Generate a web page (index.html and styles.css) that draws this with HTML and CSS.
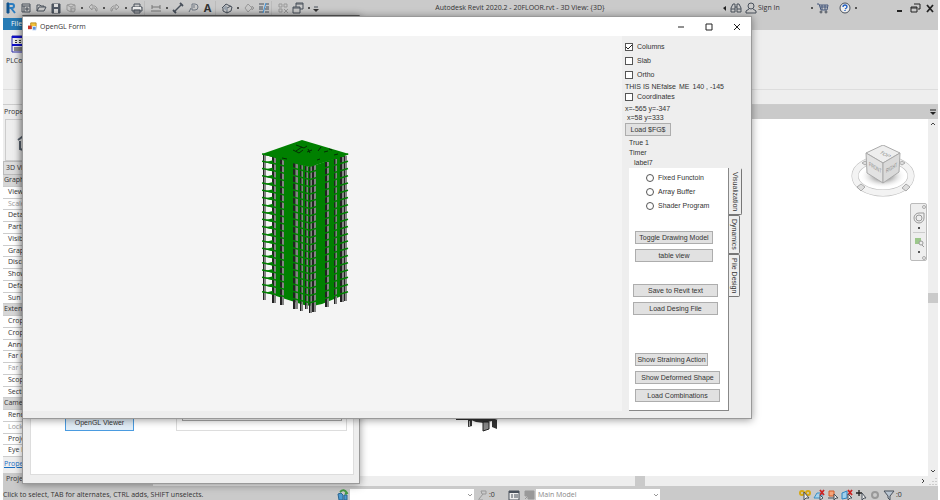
FILE: index.html
```
<!DOCTYPE html>
<html lang="en">

<head>
    <meta charset="UTF-8">
    <meta name="viewport" content="width=device-width, initial-scale=1.0">
    <title>Autodesk Revit 2020.2</title>
    <link rel="stylesheet" href="styles.css">
</head>

<body>
    <header class="titlebar">
        <button class="tool" aria-label="Revit"><svg viewBox="0 0 12 12"><path d="M2 1h2v10H2z" fill="#12548f" stroke="#12548f"/><path d="M4 2h3a2 2 0 0 1 0 4H4M6 6l4 5" fill="none" stroke="#2b7dc0" stroke-width="2"/></svg></button>
        <button class="tool" aria-label="Home"><svg viewBox="0 0 12 12"><path d="M2 2h8v8H2zM2 4h8M4 4v6M6 6h2v2H6z"/></svg></button>
        <button class="tool" aria-label="Open"><svg viewBox="0 0 12 12"><path d="M2 9V3h3l1 1h3v1M2 9l2-4h7L9 9z"/></svg></button>
        <button class="tool" aria-label="Save"><svg viewBox="0 0 12 12"><path d="M2 2h8v9H2z" fill="#505965"/><path d="M4 2h4v3H4zM4 7h4v4H4z" fill="#ddd" stroke="none"/></svg></button>
        <button class="tool dim" aria-label="Synchronize"><svg viewBox="0 0 12 12"><path d="M6 2l4 1v5l-4 2-4-2V3zM2 3l4 2 4-2M6 5v5"/><circle cx="8" cy="8" r="2" fill="#bbb"/></svg></button>
        <span class="dot"></span>
        <button class="tool dim" aria-label="Undo"><svg viewBox="0 0 12 12"><path d="M5 2L2 5l3 3V6h3l1 3h1V6L8 4H5z"/></svg></button>
        <span class="dot"></span>
        <button class="tool dim" aria-label="Redo"><svg viewBox="0 0 12 12"><path d="M7 2l3 3-3 3V6H4L3 9H2V6l2-2h3z"/></svg></button>
        <span class="dot"></span>
        <button class="tool" aria-label="Print"><svg viewBox="0 0 12 12"><path d="M3 5V2h6v3M1 5h10v4H1zM3 8h6v3H3z"/><path d="M2 5h8v2H2z" fill="#eee" stroke="none"/></svg></button>
        <span class="sep"></span>
        <button class="tool dim" aria-label="Measure"><svg viewBox="0 0 12 12"><path d="M2 3v4M10 3v4M2 5h8M1 9h10" stroke="#777"/></svg></button>
        <span class="dot"></span>
        <button class="tool" aria-label="Aligned Dimension"><svg viewBox="0 0 12 12"><path d="M3 9l6-6" stroke-width="1.4"/><path d="M1 8l3 3M8 1l3 3" stroke-width="1.8"/></svg></button>
        <button class="tool" aria-label="Tag"><svg viewBox="0 0 12 12"><path d="M2 10l2-4M5 8V2h3a3 3 0 0 1 0 6zM7 3v3" stroke="#707883"/></svg></button>
        <button class="tool letter" aria-label="Text">A</button>
        <span class="sep"></span>
        <button class="tool" aria-label="Default 3D View"><svg viewBox="0 0 12 12"><path d="M1 6l4-4 6 3-1 4-4 2-4-2V6M6 6v5M6 6l4-2"/><path d="M2 6l3-3 2 4v3z" fill="#9aa3ad" stroke="none"/></svg></button>
        <span class="dot"></span>
        <button class="tool dim" aria-label="Section"><svg viewBox="0 0 12 12"><path d="M5 2l4 4-4 4-3-4zM9 4l2 2-2 2z"/></svg></button>
        <button class="tool" aria-label="Thin Lines"><svg viewBox="0 0 12 12"><path d="M1 2h5M1 5h4M1 7h4M1 10h4M8 2h3M8 5h3M7 7h4M7 10h4" stroke-width="1.2"/><path d="M8 1L5 11" stroke="#3b93dc"/></svg></button>
        <span class="sep"></span>
        <button class="tool dim" aria-label="Close Hidden Windows"><svg viewBox="0 0 12 12"><path d="M2 2h3v3H2zM7 2h3v3H7zM2 7h3v3H2zM7 7l4 4M11 7l-4 4"/></svg></button>
        <button class="tool" aria-label="Switch Windows"><svg viewBox="0 0 12 12"><path d="M4 1h7v6H8M1 5h7v6H1zM4 5V1M1 6h7M4 2h7"/></svg></button>
        <span class="dot"></span>
        <button class="tool narrow" aria-label="Customize"><svg viewBox="0 0 6 12"><path d="M1 5h4"/><path d="M0 7h6L3 10z" fill="#333" stroke="none"/></svg></button>

        <h1 class="app-title">Autodesk Revit 2020.2 - 20FLOOR.rvt - 3D View: {3D}</h1>

        <button class="tool narrow" aria-label="Back"><svg viewBox="0 0 6 12"><path d="M4 4v5L1 6z" fill="#222" stroke="none"/></svg></button>
        <button class="tool" aria-label="Search"><svg viewBox="0 0 12 12"><path d="M1 10V6l2-4h2v8zM7 10V2h2l2 4v4zM5 5h2M1 7h4M7 7h4"/></svg></button>
        <button class="tool" aria-label="Account"><svg viewBox="0 0 12 12"><circle cx="6" cy="4" r="3"/><path d="M4 7l-3 2v2h10V9L8 7"/></svg></button>
        <a class="sign-in" href="#">Sign In</a>
        <span class="dot"></span>
        <button class="tool" aria-label="App Store"><svg viewBox="0 0 12 12"><path d="M0 2h2l2 6h6l1-5H3M5 3v5M8 3v5M3 5h7" stroke="#46587d"/><circle cx="4" cy="10" r="1"/><circle cx="9" cy="10" r="1"/></svg></button>
        <button class="tool help" aria-label="Help"><svg viewBox="0 0 12 12"><circle cx="6" cy="6" r="5" fill="#eee"/><path d="M4 5q0-2 2-2t2 2q0 1-2 2M6 8v1" stroke="#1d5cc0" stroke-width="1.3"/></svg></button>
        <span class="dot"></span>
        <div class="app-controls">
            <button class="tool" aria-label="Minimize"><svg viewBox="0 0 12 12"><path d="M3 9h5" stroke="#222" stroke-width="2"/></svg></button>
            <button class="tool" aria-label="Restore"><svg viewBox="0 0 12 12"><path d="M5 2h6v5H9M2 5h6v5H2zM2 6h6" stroke="#222"/></svg></button>
            <button class="tool" aria-label="Close"><svg viewBox="0 0 12 12"><path d="M3 3l6 7M9 3l-6 7" stroke="#222" stroke-width="1.8"/></svg></button>
        </div>
    </header>

    <nav class="ribbon-tabs">
        <button class="file-tab">File</button>
    </nav>
    <section class="ribbon">
        <button class="ribbon-button">
            <svg viewBox="0 0 18 18"><path d="M1 1h16v16H1z" fill="#eee" stroke="#2b2ba8"/><path d="M1 2h16M1 10h16" stroke="#11c" stroke-width="2"/><path d="M4 5h2v1H4zM8 5h2v1H8zM4 7h2v1H4zM8 7h2v1H8z" fill="#333"/><path d="M3 12h12v4H3z" fill="#888"/></svg>
            PLCoord
        </button>
    </section>

    <main class="workspace">
        <aside class="properties">
            <h2 class="panel-title">Properties</h2>
            <div class="preview">
                <svg viewBox="0 0 20 20"><path d="M2 8l8-6 8 6v8l-8 3-6-2V9" fill="none" stroke="#5a6470" stroke-width="2"/><path d="M7 10h5v7H7z" fill="#454e59"/></svg>
            </div>
            <button class="type-row">3D View: {3D}</button>
            <ul class="props">
                <li class="group">Graphics</li>
                <li>View Scale</li>
                <li class="disabled">Scale Value</li>
                <li>Detail Level</li>
                <li>Parts Visibility</li>
                <li>Visibility</li>
                <li>Graphic Display</li>
                <li>Discipline</li>
                <li>Show Hidden</li>
                <li>Default Analysis</li>
                <li>Sun Path</li>
                <li class="group">Extents</li>
                <li>Crop View</li>
                <li>Crop Region</li>
                <li>Annotation Crop</li>
                <li>Far Clip Active</li>
                <li class="disabled">Far Clip Offset</li>
                <li>Scope Box</li>
                <li>Section Box</li>
                <li class="group">Camera</li>
                <li>Rendering</li>
                <li class="disabled">Locked</li>
                <li>Projection Mode</li>
                <li>Eye Elevation</li>
            </ul>
            <a class="props-help" href="#">Properties help</a>
            <h2 class="browser-title">Project Browser</h2>
        </aside>

        <section class="view">
            <div class="view-tabs">
                <button class="tool narrow" aria-label="Views"><svg viewBox="0 0 6 12"><path d="M0 4h6" stroke="#222"/><path d="M0 6h6L3 9z" fill="#222" stroke="none"/></svg></button>
            </div>
            <div class="view-body">
                <div class="drawing">
                    <svg class="pile" viewBox="0 0 44 14">
                        <path d="M0 1h42l-6 2-8 2-8-1-5-2H0z" fill="#333"/>
                        <path d="M12 2h4v6l-4 1zM36 2h5v9l-5-2z" fill="#333"/>
                        <path d="M13 3h1v5h-1z" fill="#aaa"/>
                        <path d="M27 4h6v7l-6 2z" fill="#888" stroke="#222"/>
                    </svg>
                    <svg class="cube" viewBox="0 0 64 54">
                        <defs>
                            <radialGradient id="shade"><stop offset="0.3" stop-color="#999"/><stop offset="1" stop-color="#fff" stop-opacity="0"/></radialGradient>
                        </defs>
                        <ellipse cx="32" cy="31" rx="28" ry="17" fill="none" stroke="#bbb" stroke-width="7"/>
                        <ellipse cx="32" cy="31" rx="28" ry="17" fill="none" stroke="#f3f3f3" stroke-width="6"/>
                        <ellipse cx="32" cy="31" rx="23" ry="12" fill="url(#shade)"/>
                        <path d="M6 42l4-3 4 3-4 4zM51 43l4-4 4 3-4 4zM11 18l3-2 3 2-3 2zM48 18l3-2 3 2-3 2z" fill="#ddd" stroke="#aaa"/>
                        <path d="M32 0l17 8-17 10-17-10z" fill="#eee" stroke="#aaa"/>
                        <path d="M15 8l17 10v20L16 28z" fill="#e2e2e2" stroke="#aaa"/>
                        <path d="M49 8l-17 10v20l16-11z" fill="#dadada" stroke="#aaa"/>
                        <text transform="matrix(.8 .4 -.7 .5 28 8)">TOP</text>
                        <text transform="matrix(.6 .35 0 1 18 21)">FRONT</text>
                        <text transform="matrix(.6 -.35 0 1 35 28)">RIGHT</text>
                    </svg>
                    <div class="navbar">
                        <span class="nav-dot"></span>
                        <button class="tool dim" aria-label="Steering Wheel"><svg viewBox="0 0 12 12"><path d="M6 1h5v5a5 5 0 1 1-5-5z"/><circle cx="6" cy="6" r="3"/></svg></button>
                        <span class="dot"></span>
                        <hr>
                        <button class="tool dim" aria-label="Zoom"><svg viewBox="0 0 12 12"><path d="M2 2h6v6H2z" fill="#9cc78b" stroke="none"/><circle cx="8" cy="7" r="2" fill="#eee"/><path d="M9 9l2 2"/></svg></button>
                        <span class="dot"></span>
                        <span class="nav-dot"></span>
                    </div>
                </div>
                <div class="scroll-y">
                    <svg viewBox="0 0 10 10"><path d="M3 6l2-2 2 2"/></svg>
                    <span class="thumb"></span>
                    <svg viewBox="0 0 10 10"><path d="M3 4l2 2 2-2"/></svg>
                </div>
            </div>
            <div class="scroll-x">
                <span class="thumb"></span>
                <svg viewBox="0 0 10 10"><path d="M4 3l2 2-2 2"/></svg>
                <svg viewBox="0 0 10 10"><path d="M8 2v1M8 5v1M8 8v1M5 5v1M5 8v1M2 8v1" stroke="#aaa"/></svg>
            </div>
        </section>
    </main>

    <footer class="status">
        <p class="hint">Click to select, TAB for alternates, CTRL adds, SHIFT unselects.</p>
        <button class="tool" aria-label="Worksets"><svg viewBox="0 0 12 12"><path d="M1 5l3-1 2 2v5H2zM7 6h3v5H7z" fill="#4d9ad0" stroke="#2b6690"/><path d="M3 3q4-4 7 1L8 5" stroke="#469a45" stroke-width="2"/></svg></button>
        <select class="workset" aria-label="Active workset"><option></option></select>
        <button class="tool dim" aria-label="Editable only"><svg viewBox="0 0 12 12"><path d="M3 10l4-5M2 11h5M5 2h5v3H6z"/></svg></button>
        <output class="count">:0</output>
        <button class="tool" aria-label="Design options"><svg viewBox="0 0 12 12"><path d="M1 2h10v9H1z" fill="#eee"/><path d="M1 3h10" stroke-width="2"/><path d="M3 6h2M6 6h4M3 8h2M6 8h4"/></svg></button>
        <button class="tool dim" aria-label="Add to set"><svg viewBox="0 0 12 12"><path d="M2 2h9v8H5V7H2z" fill="#999"/><path d="M2 10l3-3"/></svg></button>
        <select class="option" aria-label="Design option"><option>Main Model</option></select>
        <div class="select-tools">
            <button class="tool" aria-label="Select links"><svg viewBox="0 0 12 12"><path d="M1 4a2 2 0 1 1 4 0 2 2 0 1 1-4 0zM7 4a2 2 0 1 1 4 0 2 2 0 1 1-4 0z" stroke="#d6a712" stroke-width="2"/><path d="M5 3v8l2-2h3z" fill="#eee"/></svg></button>
            <button class="tool" aria-label="Select underlay"><svg viewBox="0 0 12 12"><path d="M1 9l3-5h5v5z" fill="#a5d4ee" stroke="#3b8ec4"/><path d="M7 1l4 5M11 1L7 6" stroke="#c22" stroke-width="1.8"/><path d="M7 6v5l3-2z" fill="#eee"/></svg></button>
            <button class="tool" aria-label="Select pinned"><svg viewBox="0 0 12 12"><path d="M2 2h5v5H2z" fill="#f5a57b" stroke="#d45b28"/><path d="M1 9h6"/><path d="M7 5v6l2-2h2z" fill="#eee"/></svg></button>
            <button class="tool" aria-label="Select by face"><svg viewBox="0 0 12 12"><path d="M1 4l5-2v7l-5 1z" fill="#9fd0ee" stroke="#2d82c0"/><path d="M7 1l4 5M11 1L7 6" stroke="#c22" stroke-width="1.8"/><path d="M7 5v6l2-2h2z" fill="#eee"/></svg></button>
            <button class="tool" aria-label="Drag on selection"><svg viewBox="0 0 12 12"><path d="M4 1v6M1 4h6" stroke="#222" stroke-width="1.3"/><path d="M7 4v7l2-2h2z" fill="#eee"/></svg></button>
            <button class="tool dim" aria-label="Background processes"><svg viewBox="0 0 12 12"><circle cx="6" cy="6" r="3" stroke-width="2"/></svg></button>
            <button class="tool" aria-label="Filter"><svg viewBox="0 0 12 12"><path d="M1 2h10L7 7v4L5 9V7z" fill="#b8c4d0"/></svg></button>
            <output class="count">:0</output>
        </div>
    </footer>

    <section class="window plugin">
        <div class="plugin-body">
            <button class="viewer-button">OpenGL Viewer</button>
            <fieldset class="plugin-group"><div class="plugin-list"></div></fieldset>
        </div>
    </section>

    <section class="window form">
        <header class="form-title">
            <svg class="form-icon" viewBox="0 0 10 10"><path d="M3 1h6v6H3z" fill="#f3c33c" stroke="#b98a1d"/><path d="M0 4h4v4H0z" fill="#c8372d"/><path d="M5 5h4v4H5z" fill="#5a90dc" stroke="#dce8f8"/></svg>
            <h2>OpenGL Form</h2>
            <button aria-label="Minimize"><svg viewBox="0 0 10 10"><path d="M2 5h6"/></svg></button>
            <button aria-label="Maximize"><svg viewBox="0 0 10 10"><path d="M2 2h6v6H2z"/></svg></button>
            <button aria-label="Close"><svg viewBox="0 0 10 10"><path d="M2 2l6 6M8 2L2 8"/></svg></button>
        </header>
        <div class="form-body">
            <div class="gl-canvas">
                <svg class="building" id="building" viewBox="0 0 90 178"></svg>
            </div>
            <div class="side">
                <label class="check"><input type="checkbox" checked>Columns</label>
                <label class="check"><input type="checkbox">Slab</label>
                <label class="check"><input type="checkbox">Ortho</label>
                <p class="mouse"><span>THIS IS NE</span><span>false</span><span class="me">ME</span><span>140 , -145</span></p>
                <label class="check tight"><input type="checkbox">Coordinates</label>
                <p class="coord">x=-565 y=-347</p>
                <p class="coord second">x=58 y=333</p>
                <button class="btn load">Load $FG$</button>
                <p class="info">True 1</p>
                <p class="info">Timer</p>
                <p class="info indent">label7</p>
                <div class="tabs">
                    <div class="pane">
                        <label class="radio"><input type="radio" name="mode">Fixed Functoin</label>
                        <label class="radio"><input type="radio" name="mode">Array Buffer</label>
                        <label class="radio"><input type="radio" name="mode">Shader Program</label>
                        <div class="buttons draw">
                            <button class="btn">Toggle Drawing Model</button>
                            <button class="btn">table view</button>
                        </div>
                        <div class="buttons file">
                            <button class="btn">Save to Revit text</button>
                            <button class="btn">Load Desing File</button>
                        </div>
                        <div class="buttons results">
                            <button class="btn short">Show Straining Action</button>
                            <button class="btn">Show Deformed Shape</button>
                            <button class="btn">Load Combinations</button>
                        </div>
                    </div>
                    <div class="tab-list" role="tablist">
                        <button class="tab active" role="tab">Visualization</button>
                        <button class="tab" role="tab">Dynamics</button>
                        <button class="tab" role="tab">Pile Design</button>
                    </div>
                </div>
            </div>
        </div>
    </section>

    <script src="building.js"></script>
</body>

</html>
```
FILE: styles.css
```
* {
    box-sizing: border-box;
}

body {
    display: flex;
    flex-direction: column;
    height: 100vh;
    margin: 0;
    padding: 0 2px 0 3px;
    overflow: hidden;
    position: relative;
    background: #fff;
    color: #333;
    font: 7px/10px "Open Sans", "Noto Sans", sans-serif;
}

h1, h2, p, ul {
    margin: 0;
    padding: 0;
    font-size: inherit;
    font-weight: normal;
    white-space: nowrap;
}

button, select, input {
    font: inherit;
    color: inherit;
    margin: 0;
    padding: 0;
    border: 0;
    background: none;
}

svg {
    display: block;
}

/* Toolbar */
.titlebar {
    display: flex;
    align-items: center;
    height: 16px;
    background: #cacaca;
}

.tool {
    flex: none;
    display: flex;
    justify-content: center;
    align-items: center;
    width: 15px;
    height: 12px;
}

.tool svg {
    height: 12px;
    fill: none;
    stroke: #48505b;
}

.tool.dim svg {
    stroke: #999;
}

.tool.narrow {
    width: 7px;
}

.tool.letter {
    font: bold 11px/12px "Open Sans", sans-serif;
}

.dot {
    flex: none;
    width: 7px;
    height: 2px;
    background: linear-gradient(#555, #555) center / 2px 2px no-repeat;
}

.sep {
    flex: none;
    width: 4px;
    height: 14px;
    border-left: 1px solid #bbb;
}

.app-title {
    flex: 1;
    text-align: center;
}

.sign-in {
    width: 50px;
    color: inherit;
    text-decoration: none;
}

.help {
    margin-left: 7px;
}

.app-controls {
    display: flex;
    margin: 0 1px 0 33px;
}

.ribbon-tabs {
    height: 14px;
    padding-top: 2px;
    background: #cacaca;
}

.file-tab {
    width: 28px;
    height: 12px;
    padding-left: 8px;
    text-align: left;
    background: #267bb5;
    color: #fff;
}

.ribbon {
    height: 75px;
    background: linear-gradient(#eee 59px, #ddd 59px, #ddd 60px, #eee 60px);
    border-bottom: 1px solid #ccc;
}

.ribbon-button {
    display: flex;
    flex-direction: column;
    align-items: center;
    gap: 3px;
    padding: 5px 3px;
}

.ribbon-button svg {
    width: 18px;
}

/* Properties panel */
.workspace {
    flex: 1;
    display: flex;
    min-height: 0;
}

.properties {
    display: flex;
    flex-direction: column;
    width: 150px;
    background: #eee;
}

.panel-title {
    padding: 2px 1px;
}

.preview {
    height: 42px;
    margin: 0 2px;
    padding: 12px 10px;
    border: 1px solid #ccc;
}

.preview svg {
    width: 20px;
}

.type-row {
    height: 14px;
    padding-left: 2px;
    text-align: left;
    background: #ddd;
    border: 1px solid #bbb;
}

.props {
    flex: 1;
    display: flex;
    flex-direction: column;
    list-style: none;
}

.props li {
    flex: 1;
    padding-left: 5px;
    background: #fff;
    border-bottom: 1px solid #ccc;
}

.props .group {
    padding-left: 1px;
    background: #d6d6d6;
}

.props .disabled {
    color: #999;
}

.props-help {
    padding: 2px 1px 4px;
    color: #1a6fc4;
}

.browser-title {
    padding: 1px 3px 2px;
    background: #cacaca;
}

/* 3D view */
.view {
    flex: 1;
    display: flex;
    flex-direction: column;
}

.view-tabs {
    display: flex;
    justify-content: flex-end;
    height: 14px;
    padding: 1px 2px;
    background: #cacaca;
}

.view-body {
    flex: 1;
    display: flex;
}

.drawing {
    flex: 1;
    position: relative;
}

.pile {
    position: absolute;
    left: 303px;
    bottom: 44px;
    width: 44px;
}

.cube {
    position: absolute;
    top: 26px;
    right: 13px;
    width: 64px;
}

.cube text {
    font: 6px "Liberation Sans", sans-serif;
    fill: #888;
}

.navbar {
    position: absolute;
    top: 84px;
    right: 1px;
    display: flex;
    flex-direction: column;
    align-items: center;
    gap: 3px;
    width: 17px;
    padding: 1px 0 0;
    background: #eee;
    border: 1px solid #bbb;
    border-radius: 2px;
}

.navbar hr {
    width: 12px;
    margin: 0;
    border: 0;
    border-top: 1px solid #ccc;
}

.nav-dot {
    align-self: flex-end;
    width: 4px;
    height: 4px;
    border: 1px solid #aaa;
    border-radius: 50%;
}

.scroll-y, .scroll-x {
    display: flex;
    justify-content: space-between;
    background: #eee;
}

.scroll-y {
    flex-direction: column;
    width: 10px;
}

.scroll-x {
    height: 10px;
}

.scroll-x .thumb {
    margin-left: auto;
    margin-right: 273px;
}

.scroll-y svg, .scroll-x svg {
    width: 10px;
    height: 10px;
    fill: none;
    stroke: #444;
}

.thumb {
    width: 10px;
    height: 10px;
    background: #cacaca;
}

/* Status bar */
.status {
    display: flex;
    align-items: center;
    height: 14px;
    padding-top: 3px;
    background: #cacaca;
}

.hint {
    width: 332px;
}

.status select {
    height: 11px;
    width: 124px;
    padding: 0 2px;
    color: #888;
    appearance: none;
    background: #fff url("data:image/svg+xml,%3Csvg xmlns='http://www.w3.org/2000/svg' viewBox='0 0 8 8'%3E%3Cpath d='M2 3l2 2 2-2' fill='none' stroke='%23999'/%3E%3C/svg%3E") no-repeat right / 8px;
}

.count {
    width: 17px;
}

.select-tools {
    display: flex;
    align-items: center;
    margin-left: auto;
    margin-right: 25px;
}

.select-tools .tool {
    width: 14px;
}

/* Floating windows */
.window {
    position: absolute;
    display: flex;
    flex-direction: column;
    background: #eee;
    border: 1px solid #999;
    box-shadow: 0 1px 8px rgba(0, 0, 0, 0.4);
    font-family: "Liberation Sans", Arial, sans-serif;
}

.plugin {
    top: 15px;
    bottom: 16px;
    left: 22px;
    width: 36%;
    padding: 0 5px 8px 7px;
    border-top-color: #555;
}

.plugin-body {
    flex: 1;
    display: flex;
    align-items: flex-end;
    gap: 42px;
    padding: 0 6px 43px 34px;
    background: #fff;
    border: 1px solid #ddd;
}

.viewer-button {
    width: 69px;
    height: 16px;
    background: #e1edf7;
    border: 1px solid #4a9be0;
}

.plugin-group {
    flex: 1;
    min-width: 0;
    height: 40px;
    margin: 0;
    padding: 0 4px 10px 5px;
    border: 1px solid #ddd;
}

.plugin-list {
    height: 29px;
    border: 1px solid #aaa;
}

.form {
    top: 16px;
    bottom: 81px;
    left: 22px;
    right: 188px;
}

.form-title {
    display: flex;
    align-items: center;
    height: 19px;
    padding-left: 5px;
    background: #fff;
    font-family: "Open Sans", sans-serif;
}

.form-title h2 {
    flex: 1;
    padding-left: 3px;
}

.form-icon {
    width: 9px;
}

.form-title button {
    width: 28px;
    display: flex;
    justify-content: center;
}

.form-title button svg {
    width: 10px;
    fill: none;
    stroke: #222;
}

.form-body {
    flex: 1;
    display: flex;
    padding-bottom: 7px;
}

.gl-canvas {
    flex: 1;
    background: #f4f4f4;
    padding: 102px 0 0 239px;
}

.building {
    width: 90px;
}

.side {
    display: flex;
    flex-direction: column;
    align-items: flex-start;
    width: 129px;
    padding: 4px 9px 0 3px;
}

.check, .radio {
    display: flex;
    align-items: center;
    gap: 4px;
    height: 14px;
}

.check.tight {
    height: 10px;
}

.check input, .radio input {
    appearance: none;
    width: 8px;
    height: 8px;
    background: #fff;
    border: 1px solid #555;
}

.radio input {
    border-radius: 50%;
}

.check input:checked {
    background: #fff url("data:image/svg+xml,%3Csvg xmlns='http://www.w3.org/2000/svg' viewBox='0 0 6 6'%3E%3Cpath d='M0 3l2 2 4-4' fill='none' stroke='%23222'/%3E%3C/svg%3E");
}

.mouse {
    display: flex;
}

.mouse .me {
    padding: 0 3px;
}

.coord {
    line-height: 9px;
}

.check.tight + .coord {
    padding-top: 2px;
}

.coord.second {
    padding-left: 2px;
}

.btn {
    height: 13px;
    line-height: 10px;
    background: #e1e1e1;
    border: 1px solid #adadad;
    white-space: nowrap;
}

.btn.load {
    width: 46px;
    margin: 1px 0 2px;
}

.info {
    padding-left: 4px;
}

.info.indent {
    padding-left: 9px;
}

.tabs {
    flex: 1;
    align-self: stretch;
    display: flex;
    align-items: stretch;
    margin-left: 4px;
}

.pane {
    flex: 1;
    padding: 3px 8px 0 6px;
    background: #fff;
    border: 1px solid #888;
    border-width: 0 1px 1px 0;
}

.pane .radio {
    padding-left: 11px;
}

.buttons {
    display: flex;
    flex-direction: column;
    gap: 5px;
}

.draw {
    margin: 18px 7px 22px 0;
}

.file {
    margin: 0 2px 38px -2px;
}

.short {
    margin-right: 12px;
}

.tab-list {
    width: 13px;
    display: flex;
    flex-direction: column;
    align-items: flex-start;
}

.tab {
    writing-mode: vertical-rl;
    width: 11px;
    padding: 3px 0;
    background: #eee;
    border: 1px solid #777;
    border-left: 0;
    border-radius: 0 2px 2px 0;
}

.tab.active {
    width: 13px;
    border-top-color: #eee;
}
```
FILE: building.js
```
const svg = document.getElementById('building');
const floors = 19;
const pitch = 7.25;

// x, width, top, bottom of each column line
const columns = [
    [1, 3, 16, 162],
    [10, 4, 19, 165],
    [18, 4, 20, 167],
    [31, 5, 25, 171],
    [38, 3, 27, 173],
    [43, 3, 28, 171],
    [47, 3, 28, 175],
    [50, 4, 27, 174],
    [63, 4, 24, 169],
    [72, 3, 21, 166],
    [78, 4, 19, 164],
    [82, 3, 18, 163]
];

let shapes = '<path d="M11 17L48 29L82 17V157L60 166Q50 169 42 167L11 157z" fill="#008000"/>';

columns.forEach(([x, w, top, bottom]) => {
    const half = w / 2;
    shapes += `<path d="M${x} ${top}h${half}V${bottom}h-${half}z" fill="#222"/>`;
    shapes += `<path d="M${x + half} ${top}h${half}V${bottom}h-${half}z" fill="#858585"/>`;
});

for (let i = 0; i <= floors; i++) {
    const y = 17 + i * pitch;
    // slab edge and the wedge of slab seen between the left columns
    shapes += `<path d="M0 ${y - 1}L11 ${y + 1}L48 ${y + 10}L76 ${y + 2}L86 ${y - 1}" fill="none" stroke="#008000" stroke-width="1.6"/>`;
    shapes += `<path d="M3 ${y}L11 ${y - 2}V${y + 2}z" fill="#008000"/>`;
}

shapes += '<path d="M0 16L40 2L87 16L60 25L48 29L30 25z" fill="#008000"/>';
shapes += '<path d="M34 7l8 3 3-2M31 12l6 3 4-3M40 9l-6 4M45 14l5-2M59 9l-3 4M62 14l4-1M46 11l2 4M20 20l5 1M72 17l4-1M55 22l3-1M67 11l3 1" fill="none" stroke="#052c05"/>';

svg.innerHTML = shapes;
```
